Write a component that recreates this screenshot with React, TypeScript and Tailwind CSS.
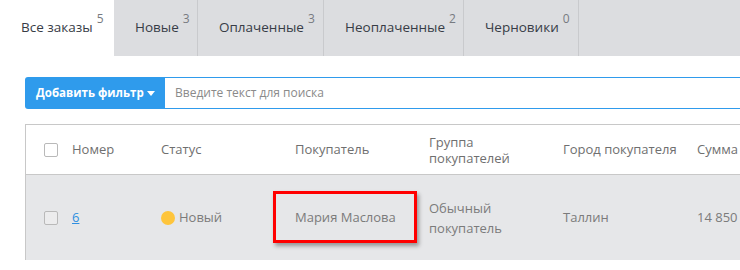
import React from "react";

const tabs = [
  { label: "Все заказы", count: 5, w: "w-[114px]", active: true },
  { label: "Новые", count: 3, w: "w-[84px]" },
  { label: "Оплаченные", count: 3, w: "w-[126px]" },
  { label: "Неоплаченные", count: 2, w: "w-[140px]" },
  { label: "Черновики", count: 0, w: "w-[115px]" },
];

function Checkbox({ fill }: { fill?: boolean }) {
  return <div className={`w-[14px] h-[14px] border border-[#b9b9b9] rounded-[2px] ${fill ? "bg-[#ececed]" : "bg-white"}`} />;
}

export default function App() {
  return (
    <div className="w-[740px] h-[270px] bg-white overflow-hidden text-[13px]" style={{ fontFamily: '"Open Sans", "Noto Sans", sans-serif' }}>
      {/* tabs */}
      <div className="flex h-[56px] bg-[#dcdde0]">
        {tabs.map((t) => (
          <div
            key={t.label}
            className={`${t.w} shrink-0 flex items-start pt-[17px] pl-[21px] ${t.active ? "bg-white" : "bg-[#dcdde0] border-r border-[#c9cacd]"}`}
          >
            <span className="text-[#373c46] text-[13.5px] leading-[20px]">{t.label}</span>
            <span className="text-[#777a80] text-[12px] leading-none ml-[4px] -mt-[4px]">{t.count}</span>
          </div>
        ))}
        <div className="flex-1" />
      </div>

      {/* filter bar */}
      <div className="flex ml-[25px] mt-[21px] h-[32px]">
        <div className="w-[140px] shrink-0 bg-[#2f9bec] rounded-l-[3px] flex items-center pl-[11px] text-white font-bold text-[11.5px]">
          <span>Добавить фильтр</span>
          <svg width="8" height="5" viewBox="0 0 8 5" className="ml-[3px] mt-[1px]">
            <path d="M0 0h8L4 5z" fill="white" />
          </svg>
        </div>
        <div className="flex-1 border-y border-[#2f9bec] flex items-center pl-[10px] text-[#8a8a8a] text-[12px]">
          Введите текст для поиска
        </div>
      </div>

      {/* table */}
      <div className="ml-[25px] mt-[15px] border-l border-t border-[#c8c8c8]">
        <div className="grid grid-cols-[46px_89px_134px_134px_134px_134px_1fr] h-[50px] items-center border-b border-[#c8c8c8] text-[#6f6f6f]">
          <div className="pl-[18px]"><Checkbox /></div>
          <div>Номер</div>
          <div>Статус</div>
          <div>Покупатель</div>
          <div className="leading-[16px]">Группа<br />покупателей</div>
          <div className="whitespace-nowrap">Город покупателя</div>
          <div>Сумма</div>
        </div>
        <div className="grid grid-cols-[46px_89px_134px_134px_134px_134px_1fr] h-[85px] items-center bg-[#e6e7e9] text-[#7b7b7b]">
          <div className="pl-[18px]"><Checkbox fill /></div>
          <div className="text-[#2f8fe0] underline">6</div>
          <div className="flex items-center">
            <span className="w-[14px] h-[14px] rounded-full bg-[#fec53c] mr-[4px]" />
            <span>Новый</span>
          </div>
          <div className="relative">
            <span>Мария Маслова</span>
            <div className="absolute left-[-22px] top-[-17px] w-[144px] h-[52px] border-[3px] border-[#ff0000] shadow-[2px_3px_4px_rgba(0,0,0,0.35)]" />
          </div>
          <div className="leading-[20px]">Обычный<br />покупатель</div>
          <div>Таллин</div>
          <div className="whitespace-nowrap">14 850</div>
        </div>
      </div>
    </div>
  );
}
